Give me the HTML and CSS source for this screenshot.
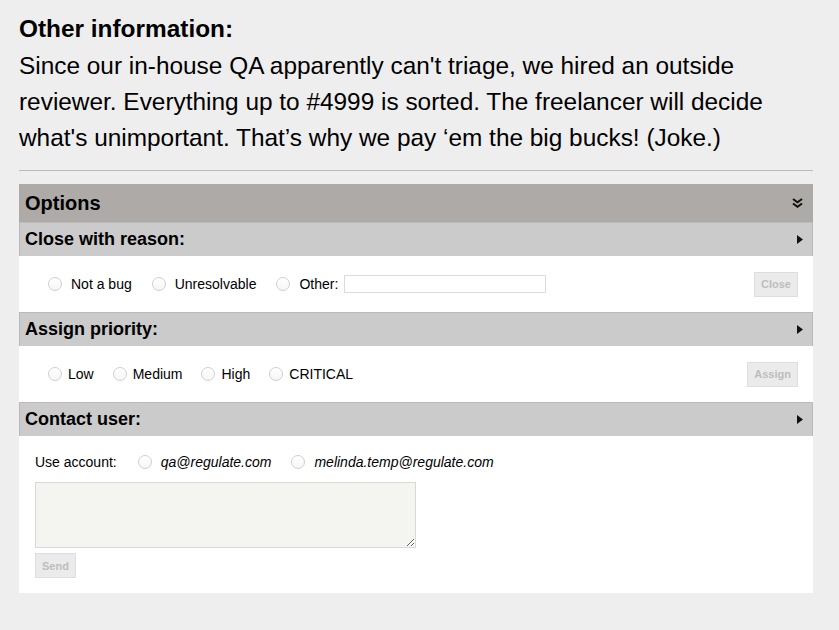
FILE: index.html
```html
<!DOCTYPE html>
<html lang="en">
<head>
    <meta charset="UTF-8">
    <meta name="viewport" content="width=device-width, initial-scale=1.0">
    <title>Ticket Options</title>
    <link rel="stylesheet" href="styles.css">
</head>
<body>
    <div class="page">
        <h3 class="info-title">Other information:</h3>
        <p class="info-text">Since our in-house QA apparently can't triage, we hired an outside reviewer. Everything up to #4999 is sorted. The freelancer will decide what's unimportant. That’s why we pay ‘em the big bucks! (Joke.)</p>

        <hr class="divider">

        <div class="options">
            <div class="options-head">
                <span>Options</span>
                <svg class="chevrons" width="11" height="10" viewBox="0 0 11 10"><path d="M1 1l4.5 3.3L10 1M1 5.5l4.5 3.3L10 5.5" fill="none" stroke="#111" stroke-width="2"/></svg>
            </div>

            <div class="group">
                <div class="group-head">
                    <span>Close with reason:</span>
                    <svg width="6" height="9" viewBox="0 0 6 9"><path d="M0 0L6 4.5L0 9z" fill="#111"/></svg>
                </div>
                <div class="group-body">
                    <div class="choices">
                        <label class="choice"><input type="radio" name="reason"><span>Not a bug</span></label>
                        <label class="choice"><input type="radio" name="reason"><span>Unresolvable</span></label>
                        <label class="choice"><input type="radio" name="reason"><span>Other:</span><input type="text" class="other-input"></label>
                    </div>
                    <button class="btn" disabled>Close</button>
                </div>
            </div>

            <div class="group">
                <div class="group-head">
                    <span>Assign priority:</span>
                    <svg width="6" height="9" viewBox="0 0 6 9"><path d="M0 0L6 4.5L0 9z" fill="#111"/></svg>
                </div>
                <div class="group-body">
                    <div class="choices">
                        <label class="choice tight"><input type="radio" name="priority"><span>Low</span></label>
                        <label class="choice tight"><input type="radio" name="priority"><span>Medium</span></label>
                        <label class="choice tight"><input type="radio" name="priority"><span>High</span></label>
                        <label class="choice tight"><input type="radio" name="priority"><span>CRITICAL</span></label>
                    </div>
                    <button class="btn" disabled>Assign</button>
                </div>
            </div>

            <div class="group">
                <div class="group-head">
                    <span>Contact user:</span>
                    <svg width="6" height="9" viewBox="0 0 6 9"><path d="M0 0L6 4.5L0 9z" fill="#111"/></svg>
                </div>
                <div class="contact-body">
                    <div class="account-row">
                        <span class="account-label">Use account:</span>
                        <label class="choice"><input type="radio" name="account"><em>qa@regulate.com</em></label>
                        <label class="choice"><input type="radio" name="account"><em>melinda.temp@regulate.com</em></label>
                    </div>
                    <textarea class="message-box"></textarea>
                    <button class="btn send-btn" disabled>Send</button>
                </div>
            </div>
        </div>
    </div>
</body>
</html>
```

FILE: styles.css
```css
body {
    margin: 0;
    background-color: #eeeeee;
    font-family: "Liberation Sans", Arial, sans-serif;
    color: #000;
}
.page {
    width: 794px;
    margin-left: 19px;
    padding-top: 11px;
}
.info-title {
    margin: 0;
    font-size: 24.4px;
    line-height: 36px;
    font-weight: bold;
}
.info-text {
    margin: 1px 0 0;
    font-size: 24.4px;
    line-height: 36px;
}
.divider {
    margin: 14px 0 13px;
    border: 0;
    border-top: 1px solid #bcbcbc;
}
.options {
    background: white;
}
.options-head {
    height: 38px;
    box-sizing: border-box;
    padding: 0 10px 0 6px;
    background-color: #adaaa8;
    font-size: 20px;
    font-weight: bold;
    display: flex;
    align-items: center;
    justify-content: space-between;
}
.group-head {
    height: 34px;
    box-sizing: border-box;
    padding: 0 9px 0 5px;
    background-color: #cbcbcb;
    border: 1px solid #bababa;
    border-bottom: 0;
    font-size: 18px;
    font-weight: bold;
    display: flex;
    align-items: center;
    justify-content: space-between;
}
.group-body {
    height: 56px;
    box-sizing: border-box;
    padding: 0 15px 0 29px;
    display: flex;
    align-items: center;
    justify-content: space-between;
}
.choices {
    display: flex;
    align-items: center;
}
.choice {
    display: inline-flex;
    align-items: center;
    gap: 9px;
    margin-right: 20px;
    font-size: 14px;
}
.choice.tight {
    gap: 6px;
    margin-right: 19px;
}
.choice em {
    font-style: italic;
}
input[type="radio"] {
    appearance: none;
    -webkit-appearance: none;
    width: 14px;
    height: 14px;
    margin: 0;
    border: 1px solid #cfcfcf;
    border-radius: 50%;
    background: linear-gradient(#ffffff, #f6f6f6);
    box-sizing: border-box;
}
.other-input {
    width: 202px;
    height: 18px;
    box-sizing: border-box;
    margin-left: -3px;
    border: 1px solid #dcdcdc;
    background: white;
    padding: 0 3px;
}
.btn {
    height: 25px;
    box-sizing: border-box;
    padding: 0 6px;
    background-color: #ebebeb;
    border: 1px solid #dedede;
    border-radius: 0;
    color: #bdbdbd;
    font-family: "Liberation Sans", Arial, sans-serif;
    font-size: 11px;
    font-weight: bold;
}
.contact-body {
    padding: 16px 15px 15px 16px;
}
.account-row {
    height: 20px;
    display: flex;
    align-items: center;
    font-size: 14px;
}
.account-label {
    margin-right: 21px;
}
.message-box {
    display: block;
    width: 381px;
    height: 66px;
    box-sizing: border-box;
    margin-top: 10px;
    border: 1px solid #d9d9d9;
    background-color: #f4f4f0;
}
.send-btn {
    display: block;
    margin-top: 5px;
}
```
